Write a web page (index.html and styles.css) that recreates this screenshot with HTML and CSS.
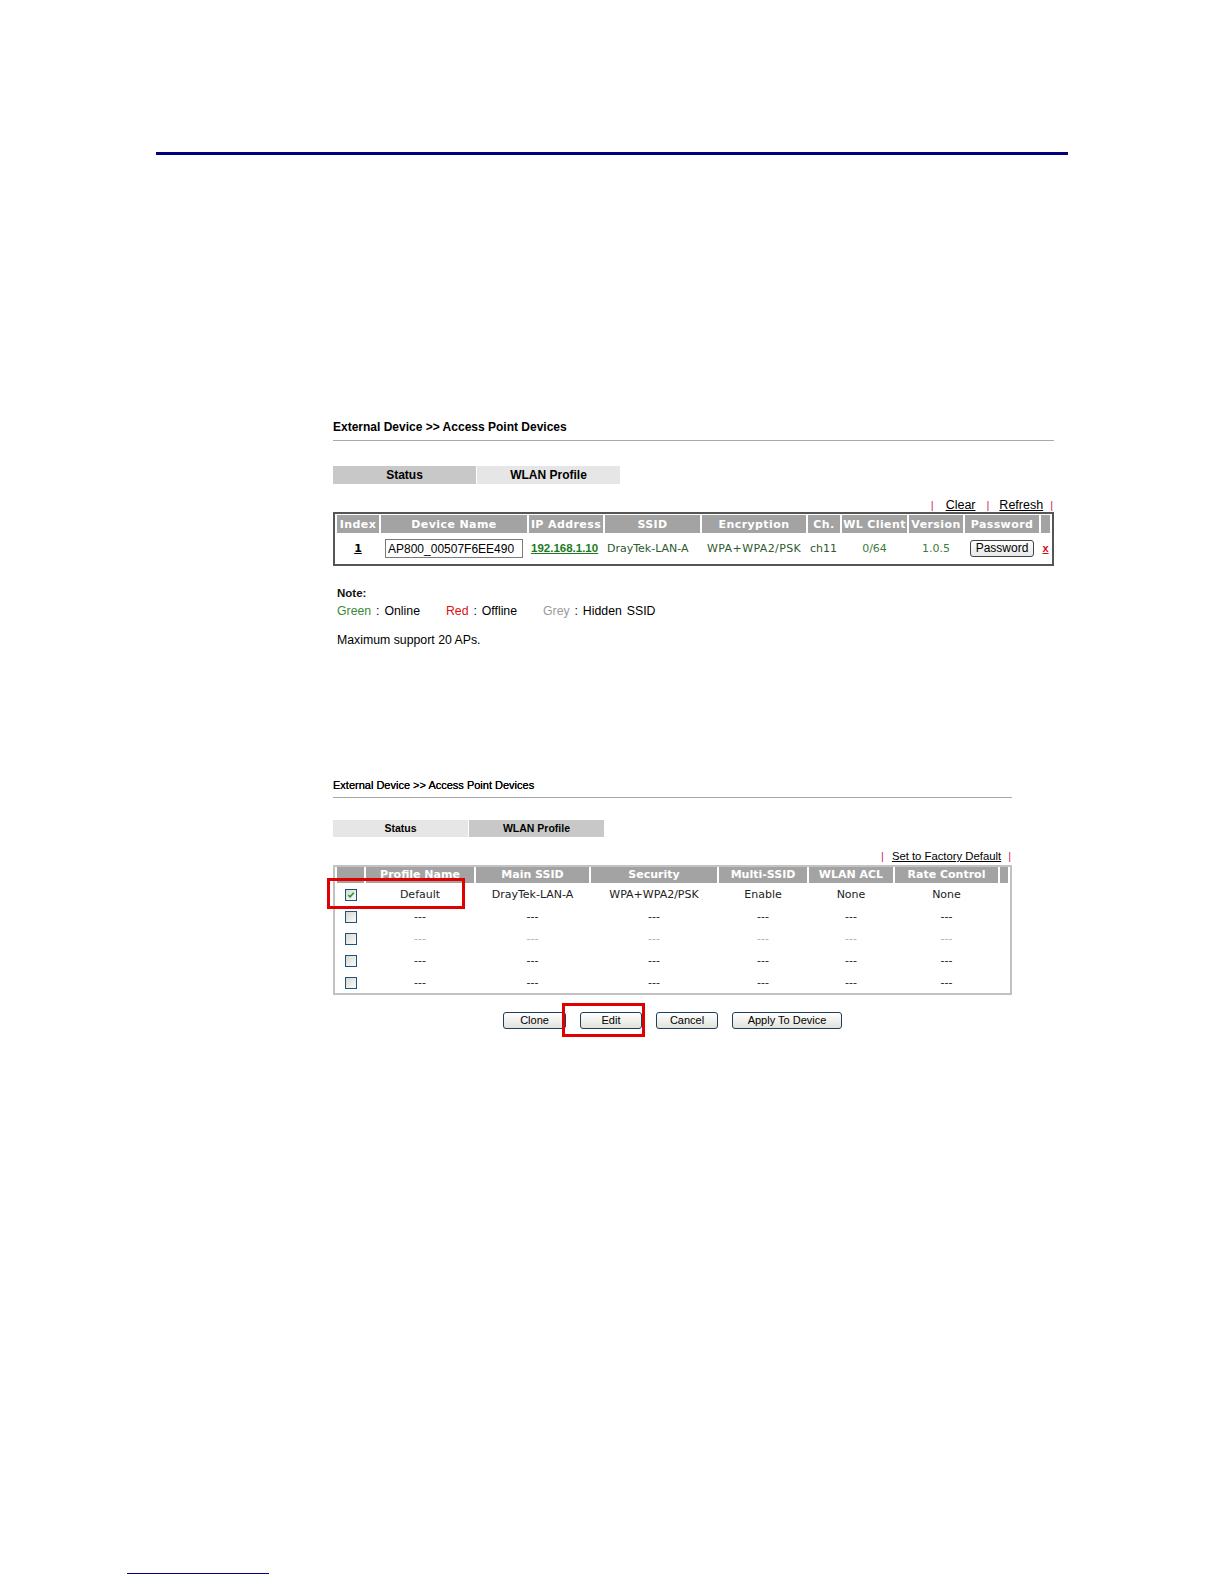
FILE: index.html
```html
<!doctype html>
<html lang="en">
  <head>
    <meta charset="UTF-8" />
    <meta name="viewport" content="width=device-width, initial-scale=1.0" />
    <link rel="stylesheet" href="styles.css">
    <title>Access Point Devices</title>
  </head>
  <body>
    <div class="top-rule"></div>

    <!-- first screen: AP status list -->
    <div class="shot shot-status">
      <div class="crumb">External Device &gt;&gt; Access Point Devices</div>

      <div class="tabs">
        <span class="tab on">Status</span>
        <span class="tab">WLAN Profile</span>
      </div>

      <div class="links">
        <span class="bar">|</span>
        <a class="ln-clear" href="#">Clear</a>
        <span class="bar">|</span>
        <a class="ln-refresh" href="#">Refresh</a>
        <span class="bar">|</span>
      </div>

      <table class="grid ap-list">
        <colgroup>
          <col style="width: 42px">
          <col style="width: 146px">
          <col style="width: 74px">
          <col style="width: 95px">
          <col style="width: 104px">
          <col style="width: 32px">
          <col style="width: 65px">
          <col style="width: 54px">
          <col style="width: 74px">
          <col>
        </colgroup>
        <thead>
          <tr>
            <th>Index</th>
            <th>Device Name</th>
            <th>IP Address</th>
            <th>SSID</th>
            <th>Encryption</th>
            <th>Ch.</th>
            <th>WL Client</th>
            <th>Version</th>
            <th>Password</th>
            <th></th>
          </tr>
        </thead>
        <tbody>
          <tr>
            <td class="mid"><a class="idx" href="#">1</a></td>
            <td class="mid"><input class="name-box" type="text" value="AP800_00507F6EE490"></td>
            <td class="left"><a class="ip" href="#">192.168.1.10</a></td>
            <td class="left">DrayTek-LAN-A</td>
            <td class="left pad">WPA+WPA2/PSK</td>
            <td class="left">ch11</td>
            <td class="mid lite">0/64</td>
            <td class="mid lite">1.0.5</td>
            <td class="mid"><button class="pw-btn">Password</button></td>
            <td class="mid"><a class="del" href="#">x</a></td>
          </tr>
        </tbody>
      </table>

      <p class="note-title">Note:</p>
      <p class="legend">
        <span class="key"><span class="c-green">Green</span> : Online</span>
        <span class="key"><span class="c-red">Red</span> : Offline</span>
        <span class="key"><span class="c-grey">Grey</span> : Hidden SSID</span>
      </p>
      <p class="max">Maximum support 20 APs.</p>
    </div>

    <!-- second screen: WLAN profiles -->
    <div class="shot shot-profile">
      <div class="crumb">External Device &gt;&gt; Access Point Devices</div>

      <div class="tabs">
        <span class="tab">Status</span>
        <span class="tab on">WLAN Profile</span>
      </div>

      <div class="links">
        <span class="bar">|</span>
        <a class="ln-factory" href="#">Set to Factory Default</a>
        <span class="bar">|</span>
      </div>

      <table class="grid profile-list">
        <colgroup>
          <col style="width: 27px">
          <col style="width: 108px">
          <col style="width: 113px">
          <col style="width: 126px">
          <col style="width: 88px">
          <col style="width: 84px">
          <col style="width: 103px">
          <col>
        </colgroup>
        <thead>
          <tr>
            <th></th>
            <th>Profile Name</th>
            <th>Main SSID</th>
            <th>Security</th>
            <th>Multi-SSID</th>
            <th>WLAN ACL</th>
            <th>Rate Control</th>
            <th></th>
          </tr>
        </thead>
        <tbody>
          <tr>
            <td><span class="check on"><svg viewBox="0 0 11 11" width="11" height="11"><path d="M2.5 5.5 L4.5 7.5 L8.5 3" fill="none" stroke="#1f9a2a" stroke-width="1.8"/></svg></span></td>
            <td>Default</td>
            <td>DrayTek-LAN-A</td>
            <td>WPA+WPA2/PSK</td>
            <td>Enable</td>
            <td>None</td>
            <td>None</td>
            <td></td>
          </tr>
          <tr>
            <td><span class="check"></span></td>
            <td>---</td><td>---</td><td>---</td><td>---</td><td>---</td><td>---</td><td></td>
          </tr>
          <tr class="faded">
            <td><span class="check"></span></td>
            <td>---</td><td>---</td><td>---</td><td>---</td><td>---</td><td>---</td><td></td>
          </tr>
          <tr>
            <td><span class="check"></span></td>
            <td>---</td><td>---</td><td>---</td><td>---</td><td>---</td><td>---</td><td></td>
          </tr>
          <tr>
            <td><span class="check"></span></td>
            <td>---</td><td>---</td><td>---</td><td>---</td><td>---</td><td>---</td><td></td>
          </tr>
        </tbody>
      </table>

      <div class="actions">
        <button class="btn btn-clone">Clone</button>
        <button class="btn btn-edit">Edit</button>
        <button class="btn btn-cancel">Cancel</button>
        <button class="btn btn-apply">Apply To Device</button>
      </div>

      <span class="mark mark-default"></span>
      <span class="mark mark-edit"></span>
    </div>

    <div class="foot-rule"></div>
  </body>
</html>
```

FILE: styles.css
```css
body {
  margin: 0;
  font-family: "Liberation Sans", Arial, sans-serif;
  color: #000;
}

p {
  margin: 0;
}

.top-rule {
  margin: 152px 0 0 156px;
  width: 912px;
  height: 3px;
  background: #000080;
}

.foot-rule {
  margin: 544px 0 0 127px;
  width: 142px;
  height: 1px;
  background: #000080;
}

/* screenshots */
.shot {
  margin-left: 333px;
}

.shot-status {
  width: 721px;
  margin-top: 265px;
}

.shot-profile {
  position: relative;
  width: 679px;
  margin-top: 131px;
}

.crumb {
  font-size: 12px;
  line-height: 14px;
  font-weight: bold;
  padding-bottom: 6px;
  border-bottom: 1px solid #a9a9a9;
}

.shot-profile .crumb {
  font-size: 11px;
  font-weight: normal;
  padding-bottom: 5px;
  text-shadow: 0 0 0.2px #000;
}

/* tabs */
.tabs {
  display: flex;
  gap: 1px;
  margin-top: 25px;
}

.tab {
  width: 143px;
  height: 18px;
  line-height: 18px;
  text-align: center;
  font-size: 12px;
  font-weight: bold;
  background: #e6e6e6;
}

.tab.on {
  background: #c8c8c8;
}

.shot-profile .tabs {
  margin-top: 22px;
}

.shot-profile .tab {
  width: 135px;
  height: 17px;
  line-height: 17px;
  font-size: 10.5px;
}

/* link bar above tables */
.links {
  display: flex;
  justify-content: flex-end;
  align-items: center;
  margin-top: 14px;
  height: 14px;
  padding-right: 1px;
  font-size: 12.5px;
}

.links a {
  color: #000;
  text-decoration: underline;
}

.ln-clear {
  margin: 0 11px 0 12px;
}

.ln-refresh {
  margin: 0 7px 0 10px;
}

.bar {
  color: #d0206a;
  font-size: 11px;
}

.shot-profile .links {
  margin-top: 12px;
  font-size: 11.3px;
}

.ln-factory {
  margin: 0 7px 0 8px;
}

/* tables */
.grid {
  border-collapse: separate;
  table-layout: fixed;
}

.grid th {
  padding: 0;
  background: #a3a3a3;
  color: #fff;
  font-family: "DejaVu Sans", Verdana, sans-serif;
  font-size: 11px;
  font-weight: bold;
  text-align: center;
  white-space: nowrap;
  overflow: hidden;
}

.grid td {
  padding: 0;
  white-space: nowrap;
  font-family: "DejaVu Sans", Verdana, sans-serif;
  font-size: 11px;
}

.ap-list {
  width: 721px;
  border: 2px solid #555;
  border-spacing: 2px 1px;
}

.ap-list th {
  height: 18px;
  letter-spacing: 0.4px;
  font-weight: 600;
}

.ap-list td {
  height: 29px;
  color: #2e5a2e;
}

.ap-list td.left {
  padding-left: 2px;
}

.ap-list td.pad {
  padding-left: 5px;
  letter-spacing: 0.4px;
}

.ap-list td.mid {
  text-align: center;
}

.ap-list td.lite {
  color: #3b7d3b;
}

.idx {
  color: #000;
  font-weight: bold;
  text-decoration: underline;
}

.name-box {
  box-sizing: border-box;
  width: 138px;
  height: 19px;
  margin: 0;
  padding: 0 2px;
  border: 1px solid #7b7b7b;
  font-family: "Liberation Sans", Arial, sans-serif;
  font-size: 12px;
  color: #000;
}

.ip {
  font-family: "Liberation Sans", Arial, sans-serif;
  font-size: 11.5px;
  font-weight: bold;
  color: #1e7a1e;
  text-decoration: underline;
}

.pw-btn {
  box-sizing: border-box;
  width: 64px;
  height: 17px;
  padding: 0;
  border: 1px solid #444;
  border-radius: 3px;
  background: linear-gradient(#fdfdfd, #e8e8e8);
  font-family: "Liberation Sans", Arial, sans-serif;
  font-size: 12px;
  line-height: 15px;
  color: #000;
}

.del {
  color: #cc1010;
  font-family: "Liberation Sans", Arial, sans-serif;
  font-size: 11px;
  font-weight: bold;
  text-decoration: underline;
}

/* notes */
.note-title {
  margin-top: 20px;
  padding-left: 4px;
  font-size: 11.5px;
  line-height: 14px;
  font-weight: bold;
  color: #111;
}

.legend {
  margin-top: 4px;
  padding-left: 4px;
  font-size: 12.3px;
  line-height: 14px;
  word-spacing: 1.5px;
}

.key {
  margin-right: 21px;
}

.c-green { color: #3a8a3a; }
.c-red { color: #e01010; }
.c-grey { color: #9a9a9a; }

.max {
  margin-top: 15px;
  padding-left: 4px;
  font-size: 12.3px;
  line-height: 14px;
}

/* profile table */
.profile-list {
  width: 679px;
  margin-top: 2px;
  border: 2px solid #c2c2c2;
  border-spacing: 2px 0;
}

.profile-list th {
  height: 16px;
  line-height: 16px;
}

.profile-list td {
  height: 22px;
  text-align: center;
  color: #222;
}

.profile-list tr.faded td {
  color: #b0b0b0;
}

.check {
  display: inline-block;
  box-sizing: border-box;
  width: 12px;
  height: 12px;
  border: 1px solid #1c5180;
  background: linear-gradient(135deg, #d8d8d2, #fbfbf8);
  vertical-align: middle;
}

.check svg {
  display: block;
  width: 10px;
  height: 10px;
}

/* buttons under the profile table */
.actions {
  display: flex;
  justify-content: center;
  gap: 14px;
  margin-top: 17px;
}

.btn {
  box-sizing: border-box;
  height: 17px;
  padding: 0;
  border: 1px solid #1f3d5c;
  border-radius: 3px;
  background: linear-gradient(#ffffff, #e2e2dc);
  font-family: "Liberation Sans", Arial, sans-serif;
  font-size: 11px;
  line-height: 15px;
  color: #000;
}

.btn-clone { width: 63px; }
.btn-edit { width: 62px; }
.btn-cancel { width: 62px; }
.btn-apply { width: 110px; }

/* red highlight frames drawn over the screenshot */
.mark {
  position: absolute;
  box-sizing: border-box;
  border: 3px solid #e00000;
}

.mark-default {
  left: -6px;
  top: 100px;
  width: 138px;
  height: 31px;
}

.mark-edit {
  left: 229px;
  top: 225px;
  width: 83px;
  height: 34px;
}
```
